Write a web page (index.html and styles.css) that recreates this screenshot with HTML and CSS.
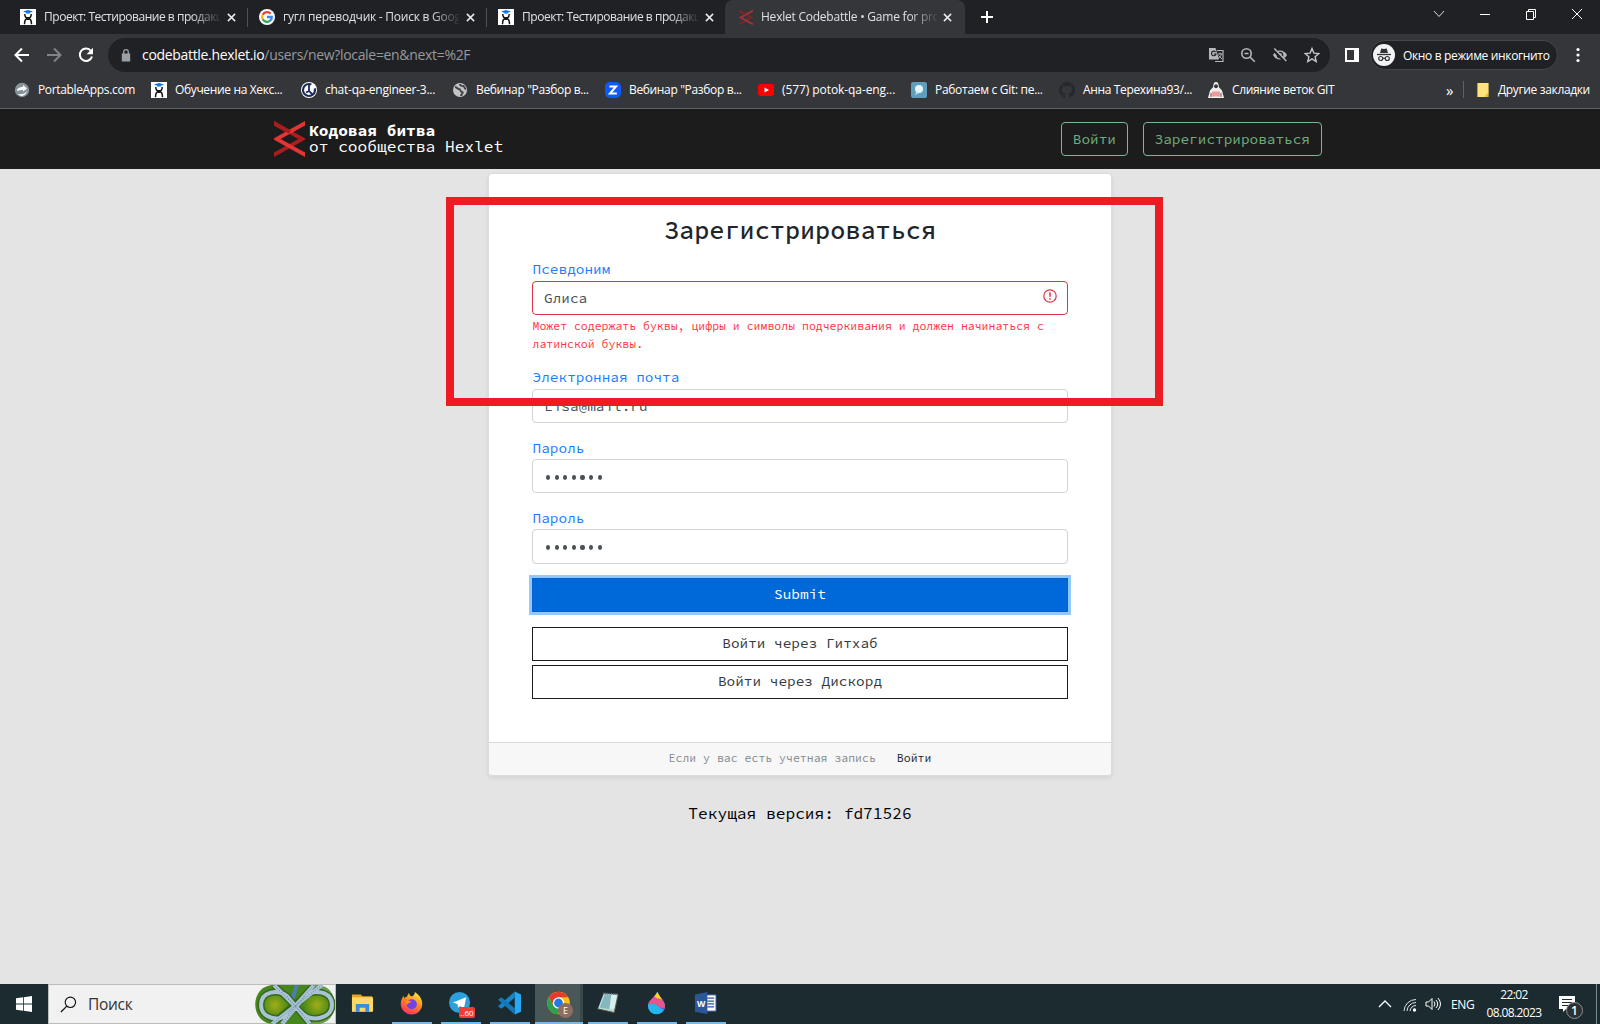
FILE: index.html
```html
<!DOCTYPE html>
<html lang="ru">
<head>
<meta charset="utf-8">
<title>Hexlet Codebattle • Game for programmers</title>
<link rel="stylesheet" href="styles.css">
</head>
<body>
<svg class="defs" width="0" height="0">
  <symbol id="hexlet" viewBox="0 0 16 16"><path fill="#fff" d="M0 0h16v16H0z"/><path d="M3 2.500L8 1l5 1.500L8 4.500z" fill="#0b72ee"/><path d="M6 3h4v1.500H6z" fill="#2684f0"/><path d="M4.800 5c0 3 1.400 4.100 3.200 4.100S11.200 8 11.200 5M4.500 15.200c0-4 1.500-5.600 3.500-5.600s3.500 1.600 3.500 5.600" fill="none" stroke="#151515" stroke-width="1.500"/><path d="M6.500 8h3v3h-3z" fill="#151515"/></symbol>
  <symbol id="cross" viewBox="0 0 10 10"><path d="M1 1l8 8M9 1L1 9" stroke="#e8eaed" stroke-width="1.7"/></symbol>
  <symbol id="codebattle" viewBox="0 0 31 36"><path d="M-1 1.700L28.500 18-1 34.300" fill="none" stroke="#a91d1f" stroke-width="3.900"/><path d="M32 1.700L2.500 18 32 34.300" fill="none" stroke="#e53435" stroke-width="3.900"/><path d="M-1 1.700L16 11.100" stroke="#a91d1f" stroke-width="3.900"/></symbol>
</svg>

<header class="browser">
  <div class="tabs">
    <div class="tab"><svg class="fav"><use href="#hexlet"/></svg><span class="tab-title t1">Проект: Тестирование в продакшене</span><svg class="close"><use href="#cross"/></svg></div>
    <div class="tab"><svg class="fav" viewBox="0 0 16 16"><circle cx="8" cy="8" r="8" fill="#fff"/><g fill="none" stroke-width="2.300"><path d="M11.600 4.600A4.900 4.900 0 0 0 3.700 5.700" stroke="#ea4335"/><path d="M3.700 5.700a4.900 4.900 0 0 0 0 4.700" stroke="#fbbc05"/><path d="M3.700 10.300a4.900 4.900 0 0 0 7.600 1.200" stroke="#34a853"/><path d="M11.200 11.600A4.500 4.500 0 0 0 12.800 8H8" stroke="#4285f4"/></g></svg><span class="tab-title t2">гугл переводчик - Поиск в Google</span><svg class="close"><use href="#cross"/></svg></div>
    <div class="tab last"><svg class="fav"><use href="#hexlet"/></svg><span class="tab-title t1">Проект: Тестирование в продакшене</span><svg class="close"><use href="#cross"/></svg></div>
    <div class="tab active"><svg class="fav dim"><use href="#codebattle"/></svg><span class="tab-title t4">Hexlet Codebattle • Game for programmers</span><svg class="close"><use href="#cross"/></svg></div>
    <svg class="plus" viewBox="0 0 12 12"><path d="M6 0v12M0 6h12" stroke="#fff" stroke-width="2"/></svg>
    <div class="controls">
      <svg viewBox="0 0 12 12"><path d="M1 3l5 5.500L11 3" fill="none" stroke="#ddd"/></svg>
      <svg viewBox="0 0 12 12"><path d="M1 6.500h10" stroke="#fff"/></svg>
      <svg viewBox="0 0 12 12"><path d="M1.500 3.500h7v8h-7zM3.500 3.500v-2h7v8h-2" fill="none" stroke="#fff"/></svg>
      <svg viewBox="0 0 12 12"><path d="M1 1l10 10M11 1L1 11" stroke="#fff"/></svg>
    </div>
  </div>

  <div class="toolbar">
    <svg class="nav" viewBox="0 0 16 16"><path d="M15 8H2M8 1.500L1.500 8 8 14.500" fill="none" stroke="#fff" stroke-width="2"/></svg>
    <svg class="nav" viewBox="0 0 16 16"><path d="M1 8h13M8 1.500L14.500 8 8 14.500" fill="none" stroke="#818286" stroke-width="2"/></svg>
    <svg class="nav" viewBox="0 0 16 16"><path d="M13 4A6.200 6.200 0 1 0 14 9.500" fill="none" stroke="#fff" stroke-width="2"/><path d="M15 .8v6.400H8.600z" fill="#fff"/></svg>
    <div class="omnibox">
      <svg class="lock" viewBox="0 0 10 13"><path d="M.8 4.500h8.400v8H.8z" fill="#9aa0a6"/><path d="M2.700 5V3a2.300 2.300 0 0 1 4.600 0v2" fill="none" stroke="#9aa0a6" stroke-width="1.300"/></svg>
      <span class="url"><b>codebattle.hexlet.io</b>/users/new?locale=en&amp;next=%2F</span>
      <div class="omni-icons">
        <svg viewBox="0 0 16 16"><path d="M1 1h6.500l3.500 11.500H1z" fill="#b5b7bb"/><path d="M9 3.500h6v11H7" fill="none" stroke="#b5b7bb" stroke-width="1.200"/><path d="M9.500 7H14M12 5.500V7M13.500 7c-.5 2-2 3.500-3.500 4.500M10.500 8.500l3.500 3.500" stroke="#b5b7bb" fill="none"/><path d="M7.600 5A2.300 2.300 0 1 0 8 7H5.800" fill="none" stroke="#202124" stroke-width="1.100"/></svg>
        <svg viewBox="0 0 16 16"><circle cx="6.500" cy="6.500" r="4.700" fill="none" stroke="#b5b7bb" stroke-width="1.600"/><path d="M10 10l4.800 4.800M4.500 6.500h4" stroke="#b5b7bb" stroke-width="1.600"/></svg>
        <svg viewBox="0 0 16 16"><path d="M1 8c3-6 11-6 14 0-3 6-11 6-14 0z" fill="#b5b7bb"/><circle cx="8" cy="8" r="2.700" fill="#b5b7bb" stroke="#202124" stroke-width="1.300"/><path d="M1.500 2.500l12 12" stroke="#202124" stroke-width="3.500"/><path d="M2.300 1.500l12 12.500" stroke="#b5b7bb" stroke-width="1.500"/></svg>
        <svg viewBox="0 0 16 16"><path d="M8 1.500l1.900 4.600 4.900.4-3.700 3.200 1.100 4.800L8 11.900l-4.200 2.600 1.100-4.800-3.700-3.200 4.900-.4z" fill="none" stroke="#c4c6c9" stroke-width="1.400"/></svg>
      </div>
    </div>
    <svg class="panel" viewBox="0 0 14 14"><path d="M1 1h12v12H1z" fill="none" stroke="#fff" stroke-width="2"/><path d="M9 1h4v12H9z" fill="#fff"/></svg>
    <div class="incognito">
      <svg viewBox="0 0 22 22"><circle cx="11" cy="11" r="11" fill="#f1f3f4"/><path d="M7 9l1.300-4.500L11 5l2.700-.5L15 9z" fill="#333"/><path d="M4 10.500h14" stroke="#333" stroke-width="1.300"/><g fill="none" stroke="#333" stroke-width="1.200"><circle cx="7.700" cy="14.500" r="2"/><circle cx="14.300" cy="14.500" r="2"/><path d="M9.700 14.200h2.600"/></g></svg>
      <span>Окно в режиме инкогнито</span>
    </div>
    <svg class="dots" viewBox="0 0 4 16"><g fill="#fff"><circle cx="2" cy="2.500" r="1.600"/><circle cx="2" cy="8" r="1.600"/><circle cx="2" cy="13.500" r="1.600"/></g></svg>
  </div>

  <div class="bookmarks">
    <div class="bm b1"><svg viewBox="0 0 16 16"><circle cx="8" cy="8" r="7.200" fill="#87939a"/><path d="M3 9c0-3 3-4 6-4V3l4 3.500L9 9.500V8C7 8 5 8 3 9z" fill="#fff"/><path d="M4 12c4 1 8 0 9-4-1 7-7 7-9 4z" fill="#fff"/></svg><span>PortableApps.com</span></div>
    <div class="bm b2"><svg><use href="#hexlet"/></svg><span>Обучение на Хекс...</span></div>
    <div class="bm b3"><svg viewBox="0 0 16 16"><circle cx="8" cy="8" r="8" fill="#fff"/><circle cx="8" cy="8" r="6" fill="none" stroke="#1c2c5b" stroke-width="2.200" stroke-dasharray="30 5"/><path d="M8 2v7l4 4M8 9l-3 1.500" stroke="#1c2c5b" stroke-width="1.800" fill="none"/></svg><span>chat-qa-engineer-3...</span></div>
    <div class="bm b4"><svg viewBox="0 0 16 16"><circle cx="8" cy="8" r="7" fill="#c2c4c6"/><path d="M3 5c2 0 2 2 4 2s1 3 3 3-1 3-1 4M8 2c0 2 1 2 3 2s1 3 3 3" fill="none" stroke="#46474a" stroke-width="2"/></svg><span>Вебинар "Разбор в...</span></div>
    <div class="bm b5"><svg viewBox="0 0 16 16"><rect width="16" height="16" rx="5" fill="#0b5cff"/><path d="M4.500 4.500h6.500L5 11.500h6.800" fill="none" stroke="#fff" stroke-width="2"/></svg><span>Вебинар "Разбор в...</span></div>
    <div class="bm b6"><svg viewBox="0 0 16 16"><rect y="2" width="16" height="12" rx="3" fill="#f00"/><path d="M6.500 5.500L11 8l-4.500 2.500z" fill="#fff"/></svg><span>(577) potok-qa-eng...</span></div>
    <div class="bm b7"><svg viewBox="0 0 16 16"><rect width="16" height="16" rx="2" fill="#5e9fc0"/><circle cx="8" cy="7" r="4" fill="#e9f4fa"/><path d="M5 10l-1 3 4-2z" fill="#c6dfeb"/></svg><span>Работаем с Git: пе...</span></div>
    <div class="bm b8"><svg viewBox="0 0 16 16"><path fill="#24292f" fill-rule="evenodd" d="M8 0a8 8 0 0 0-2.530 15.590c.4.070.55-.170.55-.380v-1.490C3.800 14.200 3.330 12.800 3.330 12.800c-.36-.92-.89-1.170-.89-1.170-.73-.5.050-.49.050-.49.800.060 1.230.83 1.230.83.710 1.220 1.870.87 2.330.66.070-.52.280-.87.500-1.070-1.770-.2-3.640-.89-3.640-3.950 0-.87.310-1.590.82-2.150-.08-.2-.36-1.020.080-2.120 0 0 .67-.21 2.200.82a7.700 7.700 0 0 1 4 0c1.530-1.040 2.200-.82 2.200-.82.440 1.100.160 1.920.080 2.120.51.560.82 1.270.82 2.150 0 3.070-1.870 3.750-3.650 3.950.29.250.54.730.54 1.480v2.190c0 .210.150.460.550.380A8 8 0 0 0 8 0z"/></svg><span>Анна Терехина93/...</span></div>
    <div class="bm b9"><svg viewBox="0 0 16 16"><path d="M8 0C6 0 5.200 2 5.200 5L2 8.500 0 16h16l-2-7.500L10.800 5C10.800 2 10 0 8 0z" fill="#f4efed"/><ellipse cx="8" cy="4.300" rx="1.900" ry="2" fill="#333"/><path d="M4 9.500h8v5H4z" fill="#ee9a9a"/><path d="M3 11v4M13 11v4" stroke="#555"/></svg><span>Слияние веток GIT</span></div>
    <span class="more">»</span>
    <div class="bm other"><svg viewBox="0 0 12 15"><path d="M0 0h12v10.500L9 15H0z" fill="#fee27c"/><path d="M12 10v5H8.500v-2z" fill="#e7b93e"/></svg><span>Другие закладки</span></div>
  </div>
</header>

<main class="page">
  <nav class="navbar">
    <svg class="logo"><use href="#codebattle"/></svg>
    <div class="brand"><strong>Кодовая битва</strong><span>от сообщества Hexlet</span></div>
    <a class="nav-btn">Войти</a>
    <a class="nav-btn">Зарегистрироваться</a>
  </nav>

  <section class="card">
    <form class="card-body">
      <h1>Зарегистрироваться</h1>
      <div class="field">
        <label>Псевдоним</label>
        <div class="input invalid"><span>Gлиса</span><svg viewBox="0 0 14 14"><circle cx="7" cy="7" r="6.200" fill="none" stroke="#dc3545" stroke-width="1.200"/><path d="M7 3.200v4.600M7 9.300v1.500" stroke="#dc3545" stroke-width="1.500"/></svg></div>
        <p class="error">Может содержать буквы, цифры и символы подчеркивания и должен начинаться с латинской буквы.</p>
      </div>
      <div class="field"><label>Электронная почта</label><div class="input">Lisa@mail.ru</div></div>
      <div class="field"><label>Пароль</label><div class="input password"><i></i><i></i><i></i><i></i><i></i><i></i><i></i></div></div>
      <div class="field"><label>Пароль</label><div class="input password"><i></i><i></i><i></i><i></i><i></i><i></i><i></i></div></div>
      <div class="submit">Submit</div>
      <div class="social">Войти через Гитхаб</div>
      <div class="social">Войти через Дискорд</div>
    </form>
    <footer class="card-footer"><span>Если у вас есть учетная запись</span><a>Войти</a></footer>
  </section>
  <p class="version">Текущая версия: fd71526</p>
  <div class="marker"></div>
</main>

<footer class="taskbar">
  <div class="start"><svg viewBox="0 0 16 16"><path d="M0 2.300l7-1v6.300H0zM7.800 1.200L16 0v7.600H7.800zM0 8.400h7v6.300l-7-1zM7.800 8.400H16V16l-8.200-1.200z" fill="#fff"/></svg></div>
  <div class="search">
    <svg class="glass" viewBox="0 0 18 18"><circle cx="11" cy="6.700" r="5.500" fill="none" stroke="#111" stroke-width="1.200"/><path d="M7.200 10.700L1 17" stroke="#111" stroke-width="1.300"/></svg>
    <span>Поиск</span>
    <svg class="art" viewBox="0 0 80 39">
      <defs><radialGradient id="leaf"><stop offset="0" stop-color="#a2ad18"/><stop offset="1" stop-color="#4d8a18"/></radialGradient></defs>
      <path d="M19 0h42c25 0 25 39 0 39H19C-6 39-6 0 19 0z" fill="#47861d"/>
      <path d="M56 0h7c22 2 22 36 0 39h-9z" fill="#6a9c50"/>
      <circle cx="20" cy="20" r="13" fill="url(#leaf)"/><circle cx="62" cy="20" r="13" fill="url(#leaf)"/>
      <path d="M42 0l-5 15" stroke="#4a7faf" stroke-width="4"/>
      <g fill="none" stroke="#35691b" stroke-width="7"><path d="M59 0L33 29C25 37 6 34 6 20S23 4 32 11l23 28M19 0l29 29c8 8 29 5 29-9S59 4 50 11L17 39"/></g>
      <g fill="none" stroke="#a9c3d5" stroke-width="4"><path d="M59 0L33 29C25 37 6 34 6 20S23 4 32 11l23 28M19 0l29 29c8 8 29 5 29-9S59 4 50 11L27 39M67 0L17 39"/></g>
      <g fill="none" stroke="#55779b" stroke-width=".8" stroke-dasharray="1 1.500"><path d="M59 0L33 29M32 11l23 28M19 0l29 29M50 11L27 39M67 0L17 39"/></g>
    </svg>
  </div>
  <div class="apps">
    <div class="app idle"><svg viewBox="0 0 24 24"><path d="M1 3h9l2 2h10v16H1z" fill="#e9a51b"/><path d="M1 6h22v15H1z" fill="#ffd868"/><path d="M5 13h14v8h-4v-4H9v4H5z" fill="#3a8fd9"/></svg></div>
    <div class="app"><svg viewBox="0 0 24 24"><defs><linearGradient id="fire" x1=".8" y1="0" x2=".3" y2="1"><stop offset="0" stop-color="#fff04a"/><stop offset=".45" stop-color="#ff8c1a"/><stop offset="1" stop-color="#ff2f66"/></linearGradient></defs><path d="M13 5C15 4 15.500 1.500 15.500.5c4 2.500 7.700 7 7.700 12A11.200 11.200 0 0 1 .8 13C.8 9 2.500 7 3.500 4.500c.5.8.8 1.700 1 2.500 1-1 2-1.500 3-1.800.2-1.200.8-2.700 2-3.700C9.500 4 11 5 13 5z" fill="url(#fire)"/><circle cx="12.300" cy="13.300" r="5.300" fill="#7242e6"/><path d="M5 10c3-2 5 0 7 0-1 2-4 2-4.500 4z" fill="#ff8a1d"/></svg></div>
    <div class="app"><svg viewBox="0 0 24 24"><circle cx="11" cy="11.500" r="11" fill="#2ba0da"/><path d="M4 11.500L18 6l-2.500 12-4-3-2 2-.7-4z" fill="#fff"/></svg><em class="count">..60</em></div>
    <div class="app"><svg viewBox="0 0 24 24"><path d="M17.500 0L24 3v18l-6.500 3z" fill="#28a8f2"/><path d="M17.500 0v6.500L3.500 18 0 15.500z" fill="#1685ca"/><path d="M17.500 24v-6.500L3.500 6 0 8.500z" fill="#1378b9"/></svg></div>
    <div class="app focused"><svg viewBox="0 0 24 24"><circle cx="12" cy="12" r="11.800" fill="#fbc116"/><path d="M1.800 6A11.800 11.800 0 0 1 22.200 6H12L7 15z" fill="#e33b2e"/><path d="M1.800 6A11.800 11.800 0 0 0 11 23.800L17 15H7z" fill="#2ca24c"/><circle cx="12" cy="12" r="6" fill="#fff"/><circle cx="12" cy="12" r="4.600" fill="#2677e8"/></svg><em class="profile">E</em></div>
    <div class="app"><svg viewBox="0 0 24 24"><path d="M8 2l15 1-4 19-17-4z" fill="#b9dcdf"/><path d="M9 3l13 1-3 15L4 17z" fill="#86b7bd"/><path d="M16 3l6 1-3 15-5-1z" fill="#d8eef0"/><path d="M7.500 2l15.500.8" stroke="#626b70" stroke-width="2" stroke-dasharray="1 1"/><path d="M1 18l18 4 4-18" fill="none" stroke="#60583f"/></svg></div>
    <div class="app"><svg viewBox="0 0 24 24"><defs><clipPath id="drop"><path d="M13 0c1 5 8 10 8 15.500a9 8.500 0 0 1-18 0C3 9 11 6 13 0z"/></clipPath></defs><g clip-path="url(#drop)"><path d="M0 0h24v24H0z" fill="#23b6ef"/><path d="M0 9c5 6 9 1 13 5s5 6 11 5V6H0z" fill="#7a5bd0"/><path d="M0 4v8c5 4 8-1 12 2s6 4 12 2V4z" fill="#e4568d"/><path d="M8 0h8l3 9c-3-2-7-1-9-4z" fill="#ffd21e"/></g></svg></div>
    <div class="app"><svg viewBox="0 0 24 24"><path d="M12 3.500h11v17H12z" fill="#fff" stroke="#2b579a"/><path d="M14 7h7M14 10h7M14 13h7M14 16h7" stroke="#2b579a" stroke-width="1.300"/><path d="M1 3l13-2.500v23L1 21z" fill="#2b579a"/><text x="7.500" y="16" text-anchor="middle" class="w">W</text></svg></div>
  </div>
  <div class="tray">
    <svg class="up" viewBox="0 0 14 8"><path d="M1 7l6-6 6 6" fill="none" stroke="#fff" stroke-width="1.300"/></svg>
    <svg class="wifi" viewBox="0 0 14 14"><g fill="none" stroke="#dfe3e4"><path d="M1 13A12 12 0 0 1 13 1.500M4 13a9 9 0 0 1 9-8.500M7 13a6 6 0 0 1 6-5.500"/></g><circle cx="11.500" cy="12" r="1.700" fill="#fff"/></svg>
    <svg class="sound" viewBox="0 0 17 14"><path d="M1 5h2.500L7 1.500v11L3.500 9H1zM9 4.500q2 2.500 0 5M11 3q3.500 4 0 8M13 1q5 6 0 12" fill="none" stroke="#fff"/></svg>
    <span class="lang">ENG</span>
    <div class="clock"><span>22:02</span><span class="date">08.08.2023</span></div>
    <div class="notice"><svg viewBox="0 0 16 16"><path d="M0 0h16v13H7l-3 3v-3H0z" fill="#fff"/><path d="M3 3.500h10M3 6.500h10M3 9.500h6" stroke="#1b2c31"/></svg><em>1</em></div>
    <div class="desktop"></div>
  </div>
</footer>
</body>
</html>
```
FILE: styles.css
```css
* { box-sizing: border-box; }
body { margin: 0; width: 1600px; height: 1024px; overflow: hidden; display: flex; flex-direction: column; font-family: "Open Sans", "Noto Sans", sans-serif; font-size: 12px; color: #fff; }
svg { display: block; flex: none; }
em { font-style: normal; }
.defs { display: none; }

.browser { flex: none; height: 109px; background: #35363a; border-bottom: 1px solid #5f6063; white-space: nowrap; }
.tabs { height: 34px; background: #202124; display: flex; align-items: center; }
.tab { width: 239px; height: 34px; padding-left: 20px; display: flex; align-items: center; position: relative; }
.tab::after { content: ""; position: absolute; right: -9px; top: 8px; width: 1px; height: 19px; background: #505256; }
.tab.last::after, .tab.active::after { display: none; }
.fav { width: 16px; height: 16px; }
.dim { opacity: .65; height: 15px; }
.tab-title { width: 176px; margin: 0 7px 0 8px; overflow: hidden; line-height: 20px; color: #dfe1e5; mask-image: linear-gradient(90deg, #000 148px, transparent 178px); }
.t1 { letter-spacing: -.47px; }
.t2 { letter-spacing: -.25px; }
.t4 { letter-spacing: -.23px; margin-left: 7px; margin-right: 6px; }
.close { width: 9px; height: 9px; }
.active { width: 240px; margin-left: 8px; padding-left: 13px; background: #35363a; border-radius: 8px 8px 0 0; }
.plus { width: 12px; height: 12px; margin-left: 16px; }
.controls { display: flex; gap: 34px; margin-left: auto; margin-right: 17px; align-self: flex-start; padding-top: 8px; }
.controls svg { width: 12px; height: 12px; }

.toolbar { height: 42px; padding-left: 14px; display: flex; align-items: center; }
.nav { width: 16px; height: 16px; margin-right: 16px; }
.omnibox { width: 1222px; height: 34px; margin-left: -2px; padding-left: 13px; padding-right: 10px; border-radius: 17px; background: #202124; display: flex; align-items: center; }
.lock { width: 10px; height: 13px; }
.url { margin-left: 11px; padding-bottom: 1px; font-size: 14px; letter-spacing: -.32px; color: #969a9f; }
.url b { font-weight: 400; color: #fff; }
.omni-icons { margin-left: auto; display: flex; gap: 16px; }
.omni-icons svg { width: 16px; height: 16px; }
.panel { width: 14px; height: 14px; margin-left: 15px; }
.incognito { width: 188px; height: 30px; margin-left: 11px; padding-left: 2px; border: 1px solid #45464a; border-radius: 15px; background: #202124; display: flex; align-items: center; gap: 8px; letter-spacing: -.35px; }
.incognito svg { width: 22px; height: 22px; }
.dots { width: 4px; height: 16px; margin-left: 18px; }

.bookmarks { height: 28px; padding: 0 0 1px 14px; display: flex; align-items: center; }
.bm { display: flex; align-items: center; gap: 8px; letter-spacing: -.35px; flex: none; }
.bm svg { width: 16px; height: 16px; }
.b1 { width: 137px; }
.b2 { width: 150px; }
.b3 { width: 151px; letter-spacing: -.25px; }
.b4 { width: 153px; }
.b5 { width: 153px; }
.b6 { width: 153px; letter-spacing: -.08px; }
.b7 { width: 148px; letter-spacing: -.3px; }
.b8 { width: 149px; }
.b9 { width: 238px; }
.more { width: 17px; font-size: 15px; }
.other { border-left: 1px solid #606165; height: 17px; padding-left: 13px; gap: 9px; }
.other svg { width: 12px; height: 14px; }

.page { position: relative; flex: 1; background: #e4e4e4; color: #212529; font-family: "Source Code Pro", "Liberation Mono", monospace; font-size: 14.4px; }
.navbar { height: 60px; padding: 0 278px 0 274px; background: #1c1c1c; display: flex; align-items: center; }
.logo { width: 31px; height: 36px; }
.brand { margin-left: 4px; margin-right: auto; margin-bottom: 2px; color: #fff; font-size: 16.2px; line-height: 16.2px; display: flex; flex-direction: column; }
.nav-btn { height: 34px; padding: 0 11px; margin-left: 15px; border: 1px solid #7ab893; border-radius: 4px; color: #6fad7f; line-height: 32px; }
.nav-btn:first-of-type { padding: 0 10.6px; }
.card { width: 624px; height: 603px; margin: 4px auto 0; border: 1px solid #dcdcdc; border-radius: 4px; background: #fff; box-shadow: 0 2px 4px rgba(0,0,0,.08); }
.card-body { height: 568px; padding: 41px 43px 0; }
h1 { margin: 0 0 14.2px; font-size: 25.2px; line-height: 30px; font-weight: 500; text-align: center; }
.field { margin-bottom: 14.4px; }
label { display: block; line-height: 21.6px; color: #1a7dff; padding-left: .6px; }
.input { height: 34.2px; padding: 0 11px; border: 1px solid #ced4da; border-radius: 4px; display: flex; align-items: center; color: #495057; }
.invalid { border-color: #dc3545; justify-content: space-between; padding-right: 10px; }
.invalid svg { width: 14px; height: 14px; margin-top: -3px; }
.error { margin: 3.5px 0 0; padding-left: .5px; font-size: 11.52px; line-height: 17.3px; color: #ff3340; }
.password { gap: 4.3px; padding-left: 13px; }
.password i { width: 4.300px; height: 4.600px; border-radius: 50%; background: #495057; margin-top: 2px; }
.submit { height: 34px; background: #0069d9; border: 1px solid #0062cc; box-shadow: 0 0 0 3px #93c7ff; color: #fff; text-align: center; line-height: 30px; margin-bottom: 14.8px; }
.social { height: 34px; border: 1px solid #1c1c1c; text-align: center; line-height: 31px; margin-bottom: 4px; color: #343a40; }
.card-footer { height: 33px; padding-bottom: 2px; border-top: 1px solid #d9d9d9; background: #f7f7f7; border-radius: 0 0 4px 4px; display: flex; justify-content: center; align-items: center; gap: 21px; font-size: 11.52px; color: #848b92; }
.card-footer a { color: #212529; }
.version { margin: 25px 0 0; text-align: center; font-size: 16.2px; line-height: 24px; color: #000; }
.marker { position: absolute; left: 446px; top: 88px; width: 717px; height: 209px; border: 8px solid #ed1c24; }

.taskbar { flex: none; height: 40px; background: #1b2b30; display: flex; }
.start { width: 48px; display: grid; place-items: center; }
.start svg { width: 16px; height: 16px; }
.search { width: 288px; border: 1px solid #bdbdbd; background: #f1f1f1; display: flex; align-items: center; color: #333; font-size: 15.5px; letter-spacing: -.3px; }
.glass { width: 17px; height: 17px; margin: 0 11px; }
.art { width: 80px; height: 39px; margin-left: auto; }
.apps { display: flex; gap: 9px; margin-left: 7px; }
.app { width: 40px; height: 40px; padding-right: 2px; border-bottom: 2px solid #76b9ed; display: grid; place-items: center; position: relative; }
.app svg { width: 23px; height: 24px; }
.idle { border-color: transparent; }
.focused { width: 48px; margin: 0 -4px; background: #4a5759; box-shadow: inset -3px 0 #3a484b; }
.count { position: absolute; left: 18px; top: 23px; width: 16px; height: 11px; border-radius: 2px; background: #f33b38; font-size: 8px; line-height: 11px; text-align: center; }
.profile { position: absolute; left: 23px; top: 19px; width: 15px; height: 15px; border-radius: 50%; background: #8d6e63; font-size: 9px; line-height: 15px; text-align: center; }
.w { font: bold 9px "Open Sans", sans-serif; fill: #fff; }
.tray { margin-left: auto; display: flex; align-items: center; }
.up { width: 14px; height: 8px; margin-right: 11px; }
.wifi { width: 14px; height: 14px; margin-right: 8px; margin-top: 2px; }
.sound { width: 17px; height: 14px; margin-right: 9px; }
.lang { width: 36px; letter-spacing: -.3px; }
.clock { width: 54px; display: flex; flex-direction: column; align-items: center; line-height: 18px; letter-spacing: -.6px; white-space: nowrap; }
.notice { width: 37px; margin-left: 18px; position: relative; }
.notice svg { width: 16px; height: 16px; }
.notice em { position: absolute; left: 7px; top: 6px; width: 17px; height: 17px; border: 1px solid #8a9193; border-radius: 50%; background: #2a3033; font-size: 12px; font-weight: 600; line-height: 15px; text-align: center; }
.desktop { width: 4px; height: 40px; border-left: 1px solid #7e888b; }
```
